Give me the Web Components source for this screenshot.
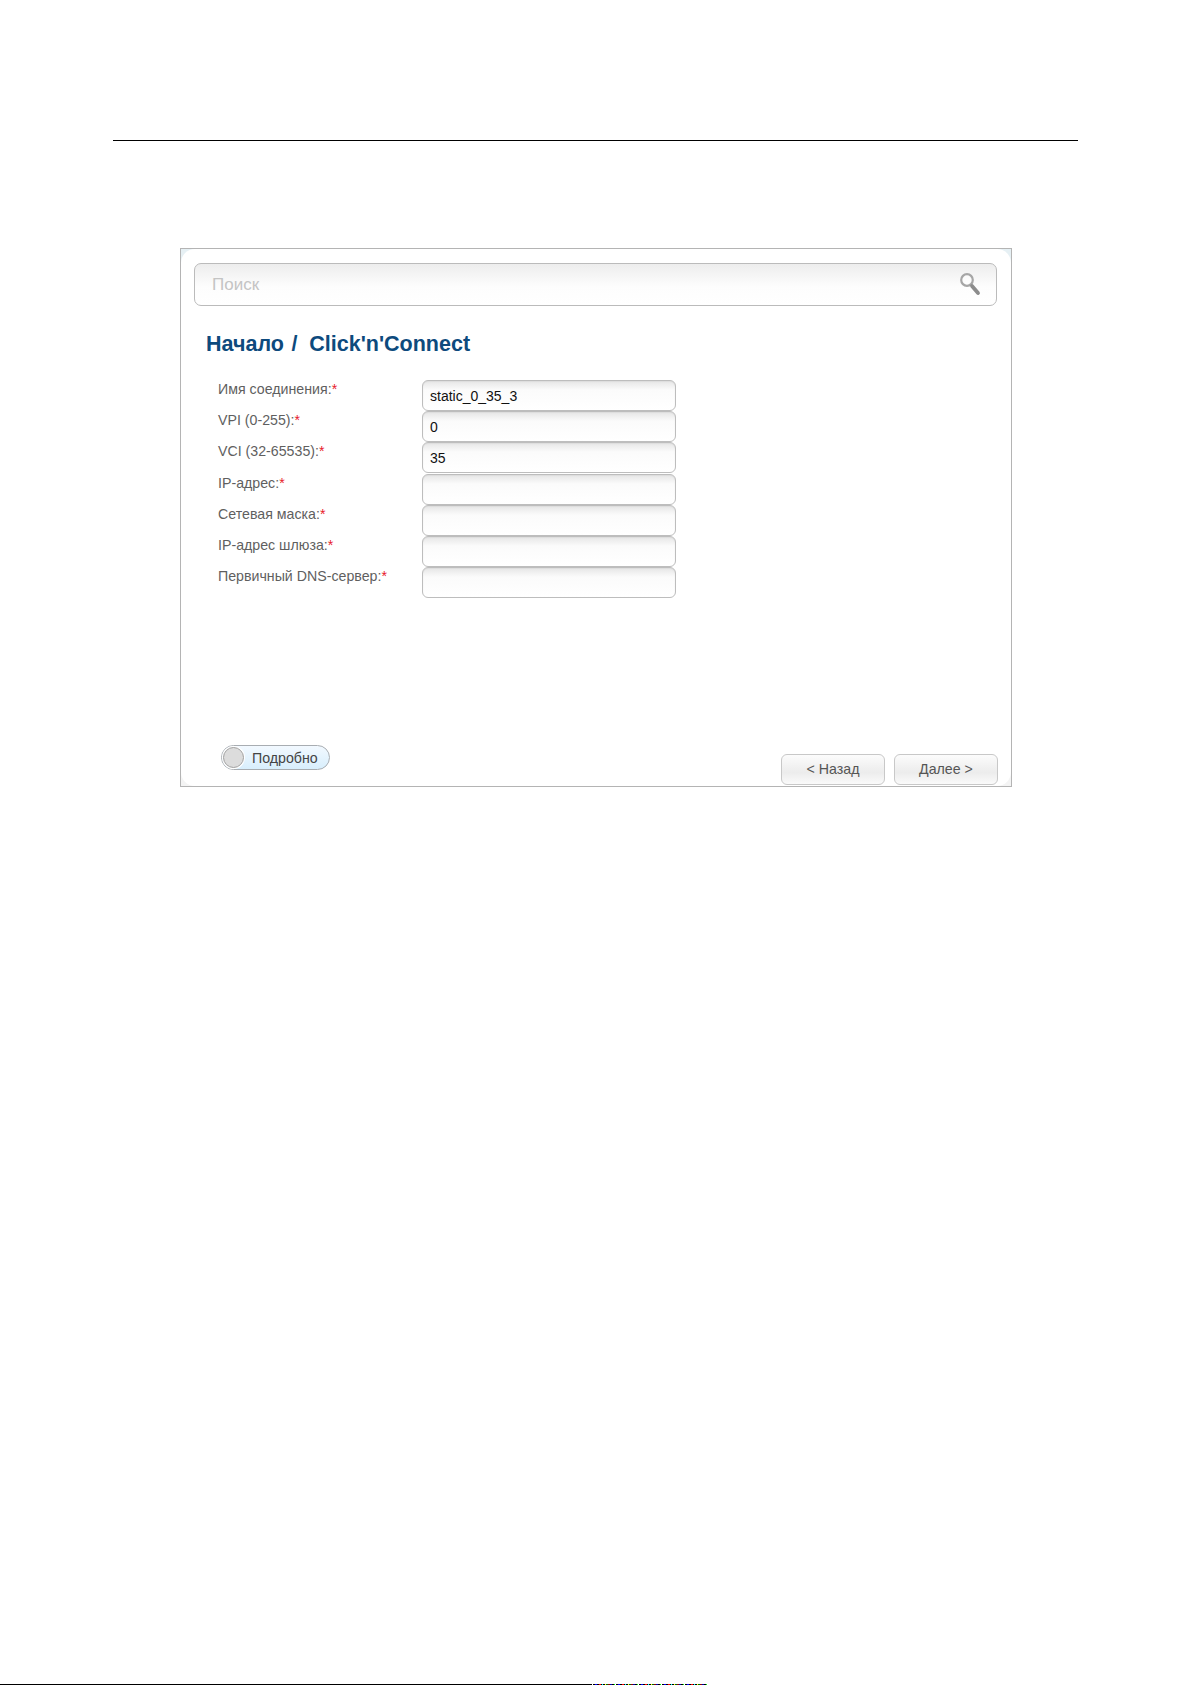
<!DOCTYPE html>
<html>
<head>
<meta charset="utf-8">
<title>Click'n'Connect</title>
<style>
    html, body { margin: 0; background: #fff; }
</style>
</head>
<body>
<manual-page>
    <wizard-frame>
        <search-bar slot="search" placeholder="Поиск"></search-bar>
        <span slot="title">Начало /&nbsp;&thinsp;Click'n'Connect</span>
        <form-row label="Имя соединения:" value="static_0_35_3"></form-row>
        <form-row label="VPI (0-255):" value="0"></form-row>
        <form-row label="VCI (32-65535):" value="35"></form-row>
        <form-row label="IP-адрес:"></form-row>
        <form-row label="Сетевая маска:"></form-row>
        <form-row label="IP-адрес шлюза:"></form-row>
        <form-row label="Первичный DNS-сервер:"></form-row>
        <details-toggle slot="toggle">Подробно</details-toggle>
        <wizard-button slot="actions">&lt; Назад</wizard-button>
        <wizard-button slot="actions">Далее &gt;</wizard-button>
    </wizard-frame>
</manual-page>
<script>
class ManualPage extends HTMLElement {
    constructor() {
        super();
        this.attachShadow({ mode: 'open' }).innerHTML = `
            <style>
                :host { display: flex; flex-direction: column; height: 1685px; overflow: hidden; box-sizing: border-box; font-family: "Liberation Sans", Arial, sans-serif; }
                .rule { height: 1px; margin: 140px 113px 0 113px; background: #000; }
                .content { padding: 107px 179px 0 180px; }
                .foot { margin-top: auto; height: 1px; display: flex; padding-right: 483px; }
                .foot i { flex: 1; background: #000; }
                .foot b { width: 116px; height: 1px; background: repeating-linear-gradient(90deg, #fff 0 1px, #000 1px 3px, #00f 3px 5px, #000 5px 7px, #f00 7px 9px, #000 9px 10px, #0ff 10px 11px, #000 11px 13px, #ff0 13px 14px, #060 14px 16px, #800 16px 18px, #00a 18px 20px, #000 20px 22px, #0f0 22px 23px); }
            </style>
            <div class="rule"></div>
            <div class="content"><slot></slot></div>
            <div class="foot"><i></i><b></b></div>
        `;
    }
}

class WizardFrame extends HTMLElement {
    constructor() {
        super();
        this.attachShadow({ mode: 'open' }).innerHTML = `
            <style>
                :host { display: block; box-sizing: border-box; height: 539px; border: 1px solid #b4b4b4; background: linear-gradient(#e6f0f4, #f4f4f4); }
                .inner { height: 100%; box-sizing: border-box; display: flex; flex-direction: column; padding: 14px 14px 1px 13px; background: #fff; border-radius: 14px; }
                h1 { margin: 25px 0 0 12px; height: 26px; font-size: 21.5px; line-height: 26px; word-spacing: 1.6px; font-weight: bold; color: #0d4a7d; }
                .fields { display: flex; flex-direction: column; margin-top: 23px; padding-left: 24px; }
                .bottom { margin-top: auto; display: flex; justify-content: space-between; align-items: flex-end; padding-left: 27px; }
                .actions { display: flex; gap: 9px; margin-right: -1px; }
            </style>
            <div class="inner">
                <slot name="search"></slot>
                <h1><slot name="title"></slot></h1>
                <div class="fields"><slot></slot></div>
                <div class="bottom">
                    <div style="margin-bottom: 13px"><slot name="toggle"></slot></div>
                    <div class="actions"><slot name="actions"></slot></div>
                </div>
            </div>
        `;
    }
}

class SearchBar extends HTMLElement {
    constructor() {
        super();
        this.attachShadow({ mode: 'open' }).innerHTML = `
            <style>
                :host { display: flex; align-items: center; justify-content: space-between; box-sizing: border-box; height: 43px; padding: 0 14px 0 17px; border: 1px solid #bbb; border-radius: 7px; background: linear-gradient(#ededed, #fdfdfd 55%, #fff); }
                span { font-size: 17px; margin-top: 1px; color: #c4c4c4; }
                svg { display: block; margin-top: -2px; }
            </style>
            <span></span>
            <svg width="23" height="26" viewBox="0 0 23 26">
                <circle cx="8" cy="9" r="5.8" fill="#fff" fill-opacity=".5" stroke="#a6a6a6" stroke-width="2.2"/>
                <path d="M13 15L19 22" stroke="#8c8c8c" stroke-width="3.8" stroke-linecap="round"/>
            </svg>
        `;
        this.shadowRoot.querySelector('span').textContent = this.getAttribute('placeholder');
    }
}

class FormRow extends HTMLElement {
    constructor() {
        super();
        this.attachShadow({ mode: 'open' }).innerHTML = `
            <style>
                :host { display: flex; height: 31.2px; }
                label { width: 204px; font-size: 14.2px; line-height: 17px; color: #5f5f5f; padding-top: 1px; }
                label b { color: #e8202a; font-weight: normal; }
                .input { box-sizing: border-box; width: 254px; height: 31px; padding: 5px 7px 0 7px; border: 1px solid #bdbdbd; border-radius: 6px; background: linear-gradient(#e6e6e6, #fbfbfb 9px, #fff); box-shadow: inset 0 1px 1px #ddd; font-size: 14px; line-height: 20px; color: #111; }
            </style>
            <label><span></span><b>*</b></label>
            <div class="input"></div>
        `;
        this.shadowRoot.querySelector('span').textContent = this.getAttribute('label');
        this.shadowRoot.querySelector('.input').textContent = this.getAttribute('value') || '';
    }
}

class DetailsToggle extends HTMLElement {
    constructor() {
        super();
        this.attachShadow({ mode: 'open' }).innerHTML = `
            <style>
                :host { display: inline-flex; align-items: center; box-sizing: border-box; width: 109px; height: 25px; padding: 0 10px 0 1px; border: 1px solid #a8adb2; border-radius: 13px; background: linear-gradient(#f2f9ff, #d8eefc); font-size: 14.2px; color: #444; }
                i { box-sizing: border-box; width: 21px; height: 21px; margin-right: 8px; border: 1px solid #a0a0a0; border-radius: 50%; background: #dcdcdc; box-shadow: 0 0 0 1px #fff; }
            </style>
            <i></i><slot></slot>
        `;
    }
}

class WizardButton extends HTMLElement {
    constructor() {
        super();
        this.attachShadow({ mode: 'open' }).innerHTML = `
            <style>
                :host { display: flex; align-items: center; justify-content: center; box-sizing: border-box; width: 104px; height: 31px; padding-bottom: 1px; border: 1px solid #c8c8c8; border-radius: 6px; background: linear-gradient(#fcfcfc, #ececec 60%, #fafafa); font-size: 14.2px; color: #555; }
            </style>
            <slot></slot>
        `;
    }
}

customElements.define('manual-page', ManualPage);
customElements.define('wizard-frame', WizardFrame);
customElements.define('search-bar', SearchBar);
customElements.define('form-row', FormRow);
customElements.define('details-toggle', DetailsToggle);
customElements.define('wizard-button', WizardButton);
</script>
</body>
</html>
